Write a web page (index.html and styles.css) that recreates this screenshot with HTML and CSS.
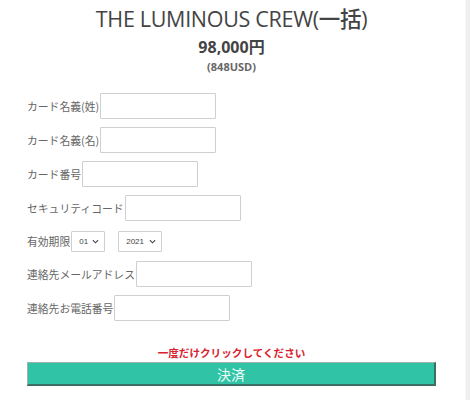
FILE: index.html
```html
<!DOCTYPE html>
<html lang="ja">
<head>
<meta charset="utf-8">
<link rel="stylesheet" href="styles.css">
</head>
<body>
<div class="page">
  <main class="content">
    <h1 class="title">THE LUMINOUS CREW(一括)</h1>
    <p class="price">98,000円</p>
    <p class="usd">(848USD)</p>
    <form class="form">
      <div class="row"><label class="label">カード名義(姓)</label><input class="field" type="text"></div>
      <div class="row"><label class="label">カード名義(名)</label><input class="field" type="text"></div>
      <div class="row"><label class="label">カード番号</label><input class="field" type="text"></div>
      <div class="row"><label class="label">セキュリティコード</label><input class="field" type="text"></div>
      <div class="row row-select">
        <label class="label">有効期限</label>
        <span class="select sel-month">01<svg class="chev" viewBox="0 0 8 5" width="7" height="5"><path d="M1 1 L4 4 L7 1" fill="none" stroke="#444" stroke-width="1.3"/></svg></span>
        <span class="select sel-year">2021<svg class="chev" viewBox="0 0 8 5" width="7" height="5"><path d="M1 1 L4 4 L7 1" fill="none" stroke="#444" stroke-width="1.3"/></svg></span>
      </div>
      <div class="row"><label class="label">連絡先メールアドレス</label><input class="field" type="text"></div>
      <div class="row"><label class="label">連絡先お電話番号</label><input class="field" type="text"></div>
    </form>
    <p class="warn">一度だけクリックしてください</p>
    <button class="pay" type="button">決済</button>
  </main>
  <div class="scrollbar"></div>
</div>
</body>
</html>
```

FILE: styles.css
```css
html, body {
  margin: 0;
  padding: 0;
  background: #ffffff;
}
.page {
  display: flex;
  width: 470px;
  height: 400px;
  overflow: hidden;
}
.content {
  width: 409px;
  padding: 0 29px 0 27px;
  font-family: "Noto Sans CJK JP", sans-serif;
}
.scrollbar {
  width: 5px;
  background: #efefef;
  border-left: 1px solid #f6f6f6;
}
.title {
  margin: 5px 0 0;
  font-family: "Open Sans", "Noto Sans CJK JP", sans-serif;
  font-weight: 500;
  font-size: 21.5px;
  letter-spacing: -0.3px;
  line-height: 28px;
  color: #444;
  text-align: center;
}
.price {
  margin: 3px 0 0;
  font-family: "Open Sans", "Noto Sans CJK JP", sans-serif;
  font-weight: 700;
  font-size: 16px;
  line-height: 22px;
  color: #444;
  text-align: center;
}
.usd {
  margin: 2px 0 0;
  font-family: "Open Sans", sans-serif;
  font-weight: 700;
  font-size: 11px;
  line-height: 14px;
  color: #666;
  text-align: center;
}
.form {
  margin-top: 19px;
  display: flex;
  flex-direction: column;
  gap: 8px;
}
.row {
  display: flex;
  align-items: center;
  height: 26px;
}
.row-select {
  height: 24px;
}
.label {
  font-size: 10.8px;
  color: #666;
  line-height: 14px;
  white-space: nowrap;
  margin-right: 1px;
}
.field {
  box-sizing: border-box;
  width: 116px;
  height: 26px;
  margin: 0;
  border: 1px solid #cfcfcf;
  border-radius: 1px;
  background: #fff;
  padding: 0 4px;
}
.select {
  box-sizing: border-box;
  display: inline-flex;
  align-items: center;
  justify-content: space-between;
  height: 21px;
  padding: 0 5px 0 7px;
  border: 1px solid #cfcfcf;
  border-radius: 1px;
  font-family: "Liberation Sans", sans-serif;
  font-size: 8px;
  color: #444;
  background: #fff;
}
.sel-month {
  width: 34px;
}
.sel-year {
  width: 44px;
  margin-left: 13px;
}
.chev {
  display: block;
}
.warn {
  margin: 24px 0 0;
  text-align: center;
  font-size: 10.6px;
  font-weight: 700;
  line-height: 16px;
  color: #d8232e;
}
.pay {
  display: block;
  box-sizing: border-box;
  width: 409px;
  height: 24px;
  margin: 1px 0 0;
  padding: 0;
  background: #30c3a5;
  border-top: 1px solid #9fb3ae;
  border-left: 1px solid #9fb3ae;
  border-right: 2px solid #3d6f64;
  border-bottom: 2px solid #3d6f64;
  font-family: "Noto Sans CJK JP", sans-serif;
  font-size: 14px;
  color: #e9fbf6;
  line-height: 20px;
}
```
